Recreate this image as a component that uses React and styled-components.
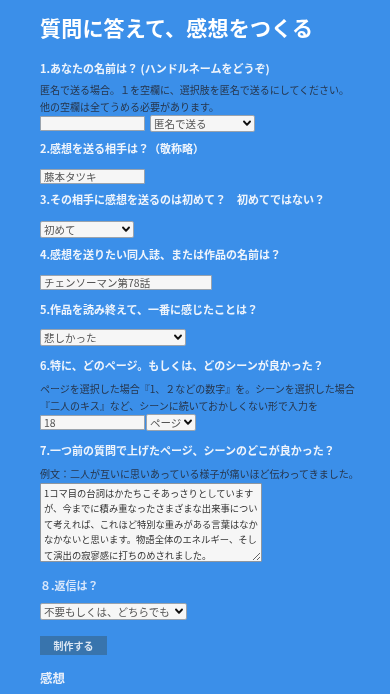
import React from 'react';
import styled, { createGlobalStyle } from 'styled-components';

const GlobalStyle = createGlobalStyle`
  html, body {
    margin: 0;
    padding: 0;
    background: #3b8fe9;
  }
  body {
    font-family: "Noto Sans CJK JP", "Noto Sans", sans-serif;
  }
`;

const Page = styled.div`
  background: #3b8fe9;
  min-height: 694px;
  padding: 12px 0 0 40px;
  box-sizing: border-box;
`;

const Title = styled.h1`
  margin: 0;
  font-size: 21px;
  line-height: 30px;
  font-weight: 700;
  color: #ffffff;
  letter-spacing: 0.2px;
`;

const Question = styled.section`
  margin-top: ${(p) => p.$top || 6}px;
`;

const Label = styled.h2`
  margin: 0 0 ${(p) => p.$bottom ?? 11}px;
  font-size: 11px;
  line-height: 20px;
  font-weight: 700;
  color: ${(p) => (p.$light ? '#d6e6fb' : '#eef4fc')};
`;

const Note = styled.p`
  margin: 0;
  font-size: 10px;
  line-height: 16.5px;
  color: #26364d;
`;

const Row = styled.div`
  display: flex;
  align-items: center;
  gap: ${(p) => p.$gap ?? 5}px;
`;

const Input = styled.input`
  display: block;
  width: ${(p) => p.$w}px;
  height: 15px;
  box-sizing: border-box;
  margin: 0;
  padding: 0 3px;
  border: 1px solid #9aa3ad;
  border-radius: 1px;
  background: #f6f6f6;
  font-family: inherit;
  font-size: 10.5px;
  line-height: 13px;
  color: #555;
  outline: none;
`;

const SelectWrap = styled.div`
  position: relative;
  width: ${(p) => p.$w}px;
  height: 17px;
`;

const Select = styled.select`
  appearance: none;
  -webkit-appearance: none;
  display: block;
  width: 100%;
  height: 17px;
  box-sizing: border-box;
  margin: 0;
  padding: 0 14px 0 3px;
  border: 1px solid #9aa3ad;
  border-radius: 2px;
  background: #f6f6f6;
  font-family: inherit;
  font-size: 10.5px;
  line-height: 15px;
  color: #555;
  outline: none;
`;

const Chevron = styled.svg`
  position: absolute;
  right: 4px;
  top: 5px;
  width: 8px;
  height: 7px;
  pointer-events: none;
`;

const TextArea = styled.textarea`
  display: block;
  width: 222px;
  height: 79px;
  box-sizing: border-box;
  margin: 0;
  padding: 2px 3px;
  border: 1px solid #8e969f;
  border-radius: 1px;
  background: #f6f6f6;
  font-family: inherit;
  font-size: 9.3px;
  line-height: 15.5px;
  color: #333;
  outline: none;
  resize: both;
`;

const Button = styled.button`
  display: block;
  margin-top: 16px;
  width: 67px;
  height: 19px;
  border: none;
  border-radius: 0;
  background: #3874ad;
  color: #dbe6f3;
  font-family: inherit;
  font-size: 10px;
  line-height: 19px;
  font-weight: 700;
  padding: 0;
`;

const Result = styled.h3`
  margin: 13px 0 0;
  font-size: 12.5px;
  line-height: 20px;
  font-weight: 700;
  color: #e6eefa;
`;

const Dropdown = ({ width, value, options }) => (
  <SelectWrap $w={width}>
    <Select defaultValue={value}>
      {options.map((o) => (
        <option key={o}>{o}</option>
      ))}
    </Select>
    <Chevron viewBox="0 0 8 7">
      <path d="M1 1.5 L4 4.8 L7 1.5" fill="none" stroke="#111" strokeWidth="1.9" strokeLinecap="round" strokeLinejoin="round" />
    </Chevron>
  </SelectWrap>
);

const App = () => {
  const impression =
    '1コマ目の台詞はかたちこそあっさりとしていますが、今までに積み重なったさまざまな出来事について考えれば、これほど特別な重みがある言葉はなかなかないと思います。物語全体のエネルギー、そして演出の寂寥感に打ちのめされました。';

  return (
    <Page>
      <GlobalStyle />
      <Title>質問に答えて、感想をつくる</Title>

      <Question $top={16}>
        <Label $bottom={4}>1.あなたの名前は？ (ハンドルネームをどうぞ)</Label>
        <Note>匿名で送る場合。１を空欄に、選択肢を匿名で送るにしてください。</Note>
        <Note>他の空欄は全てうめる必要があります。</Note>
        <Row>
          <Input $w={105} defaultValue="" />
          <Dropdown width={105} value="匿名で送る" options={['匿名で送る', '名前を入れる']} />
        </Row>
      </Question>

      <Question>
        <Label>2.感想を送る相手は？（敬称略）</Label>
        <Input $w={105} defaultValue="藤本タツキ" />
      </Question>

      <Question $top={5}>
        <Label $bottom={12}>3.その相手に感想を送るのは初めて？　初めてではない？</Label>
        <Dropdown width={94} value="初めて" options={['初めて', '初めてではない']} />
      </Question>

      <Question>
        <Label>4.感想を送りたい同人誌、または作品の名前は？</Label>
        <Input $w={172} defaultValue="チェンソーマン第78話" />
      </Question>

      <Question $top={9}>
        <Label $bottom={10}>5.作品を読み終えて、一番に感じたことは？</Label>
        <Dropdown width={146} value="悲しかった" options={['悲しかった', '楽しかった', '感動した']} />
      </Question>

      <Question $top={9}>
        <Label $bottom={6}>6.特に、どのページ。もしくは、どのシーンが良かった？</Label>
        <Note>ページを選択した場合『1、２などの数字』を。シーンを選択した場合</Note>
        <Note>『二人のキス』など、シーンに続いておかしくない形で入力を</Note>
        <Row $gap={1}>
          <Input $w={105} defaultValue="18" />
          <Dropdown width={50} value="ページ" options={['ページ', 'シーン']} />
        </Row>
      </Question>

      <Question $top={9}>
        <Label $bottom={6}>7.一つ前の質問で上げたページ、シーンのどこが良かった？</Label>
        <Note>例文：二人が互いに思いあっている様子が痛いほど伝わってきました。</Note>
        <TextArea defaultValue={impression} />
      </Question>

      <Question $top={13}>
        <Label $light $bottom={8}>８.返信は？</Label>
        <Dropdown width={147} value="不要もしくは、どちらでも" options={['不要もしくは、どちらでも', '欲しい']} />
      </Question>

      <Button type="button">制作する</Button>
      <Result>感想</Result>
    </Page>
  );
};

export default App;
